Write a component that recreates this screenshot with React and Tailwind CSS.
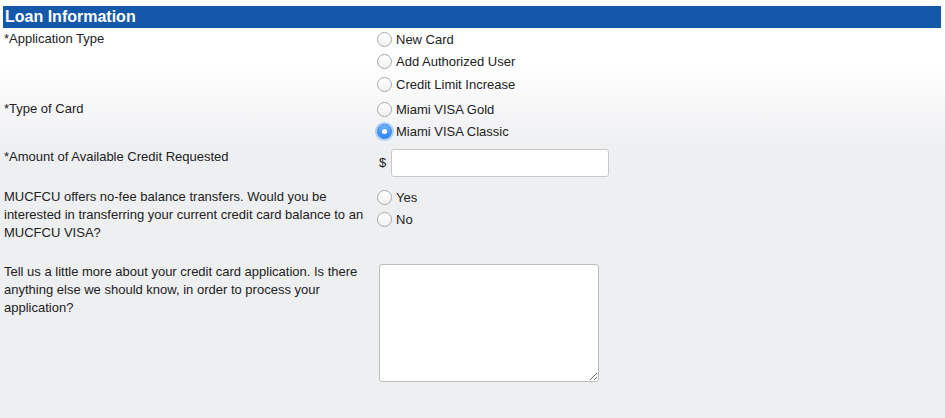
const Radio = ({ label, checked }) => (
  <label className="flex items-center h-[22.5px] gap-[4px] cursor-pointer">
    {checked ? (
      <span className="w-[15px] h-[15px] rounded-full bg-gradient-to-b from-[#6db5fd] to-[#2b86f5] border border-[#2a7fe8] shadow-[0_0_0_2px_rgba(90,160,250,0.45)] flex items-center justify-center">
        <span className="w-[5px] h-[5px] rounded-full bg-white" />
      </span>
    ) : (
      <span className="w-[15px] h-[15px] rounded-full bg-gradient-to-b from-white to-[#f1f1f1] border border-[#a9a9a9]" />
    )}
    <span>{label}</span>
  </label>
);

const Row = ({ label, className = '', labelClass = 'pt-[2px]', children }) => (
  <div className={`grid grid-cols-[374px_1fr] ${className}`}>
    <div className={`pl-[1px] pr-[6px] leading-[18px] ${labelClass}`}>{label}</div>
    <div>{children}</div>
  </div>
);

export default function App() {
  return (
    <div className="w-[945px] h-[418px] pt-[6px] pl-[3px] pr-[4px] bg-[linear-gradient(to_bottom,#ffffff_63px,#eeeff1_150px)] text-[13px] text-[#222] font-['Liberation_Sans',Arial,sans-serif] overflow-hidden">
      <div className="h-[22px] bg-[#1459a9] text-white font-bold text-[16px] leading-[22px] pl-[2px]">
        Loan Information
      </div>

      <Row label="*Application Type">
        <Radio label="New Card" />
        <Radio label="Add Authorized User" />
        <Radio label="Credit Limit Increase" />
      </Row>

      <Row label="*Type of Card" className="mt-[2.5px]">
        <Radio label="Miami VISA Gold" />
        <Radio label="Miami VISA Classic" checked />
      </Row>

      <Row label="*Amount of Available Credit Requested" className="mt-[3px]">
        <div className="flex items-center mt-[3px] pl-[2px]">
          <span className="w-[12px]">$</span>
          <input
            type="text"
            className="w-[218px] h-[28px] bg-white border border-[#c8c8c8] rounded-[3px] outline-none px-[4px]"
          />
        </div>
      </Row>

      <Row
        label="MUCFCU offers no-fee balance transfers. Would you be interested in transferring your current credit card balance to an MUCFCU VISA?"
        className="mt-[9px]"
      >
        <Radio label="Yes" />
        <Radio label="No" />
      </Row>

      <Row
        label="Tell us a little more about your credit card application. Is there anything else we should know, in order to process your application?"
        className="mt-[21px]"
        labelClass="pt-0"
      >
        <textarea className="block mt-[1px] ml-[2px] w-[220px] h-[118px] bg-white border border-[#bdbdbd] rounded-[3px] outline-none" />
      </Row>
    </div>
  );
}
